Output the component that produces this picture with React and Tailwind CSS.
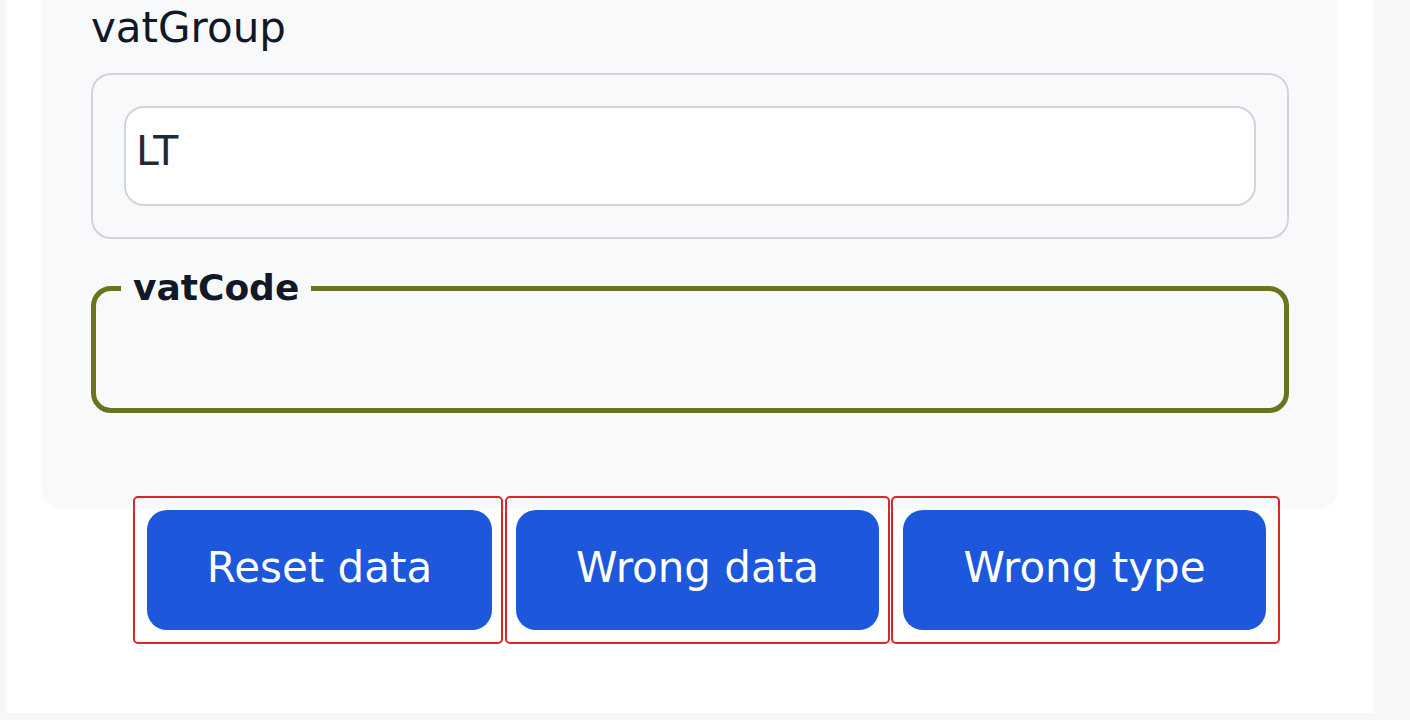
import React from 'react';

const font = { fontFamily: '"DejaVu Sans", "Liberation Sans", sans-serif' };

const buttons = [
  { label: 'Reset data', box: 'pl-[12px] pr-[9px] w-[370px]' },
  { label: 'Wrong data', box: 'pl-[9px] pr-[9px] w-[385px] ml-[2px]' },
  { label: 'Wrong type', box: 'pl-[10px] pr-[12px] w-[389px] ml-[1px]' },
];

const App = () => {
  return (
    <div
      className="min-h-screen bg-[#f6f7f9] pl-[6px] pr-[36px] pb-[7px] font-['DejaVu_Sans',_'Liberation_Sans',_sans-serif]"
    >
      <div className="bg-white px-[36px] pb-[69px]">
        <div className="bg-[#f8f9fb] rounded-b-[20px] px-[49px] pb-[96px]">
          <div className="text-[42px] leading-[56px] text-[#111827]">vatGroup</div>

          <div className="mt-[17px] border-2 border-[#d1d5db] rounded-[20px] p-[31px]">
            <input
              readOnly
              value="LT"
              className="block w-full h-[100px] bg-white border-2 border-[#d1d5db] rounded-[20px] pl-[10px] pb-[10px] text-[41px] text-[#1f2937] outline-none"
              style={font}
            />
          </div>

          <fieldset className="mt-[29px] border-[5px] border-[#6b741d] rounded-[20px] pl-[25px]">
            <legend className="px-[12px] text-[36px] leading-[40px] font-bold text-[#111827]">
              vatCode
            </legend>
            <div className="h-[100px]" />
          </fieldset>
        </div>

        <div className="flex -mt-[13px] ml-[91px]">
          {buttons.map((b) => (
            <div
              key={b.label}
              className={`border-2 border-[#dc2626] rounded-[5px] py-[12px] ${b.box}`}
            >
              <button
                type="button"
                className="h-[120px] w-full rounded-[20px] bg-[#1d57db] text-white text-[42px] pb-[5px] whitespace-nowrap"
                style={font}
              >
                {b.label}
              </button>
            </div>
          ))}
        </div>
      </div>
    </div>
  );
};

export default App;
